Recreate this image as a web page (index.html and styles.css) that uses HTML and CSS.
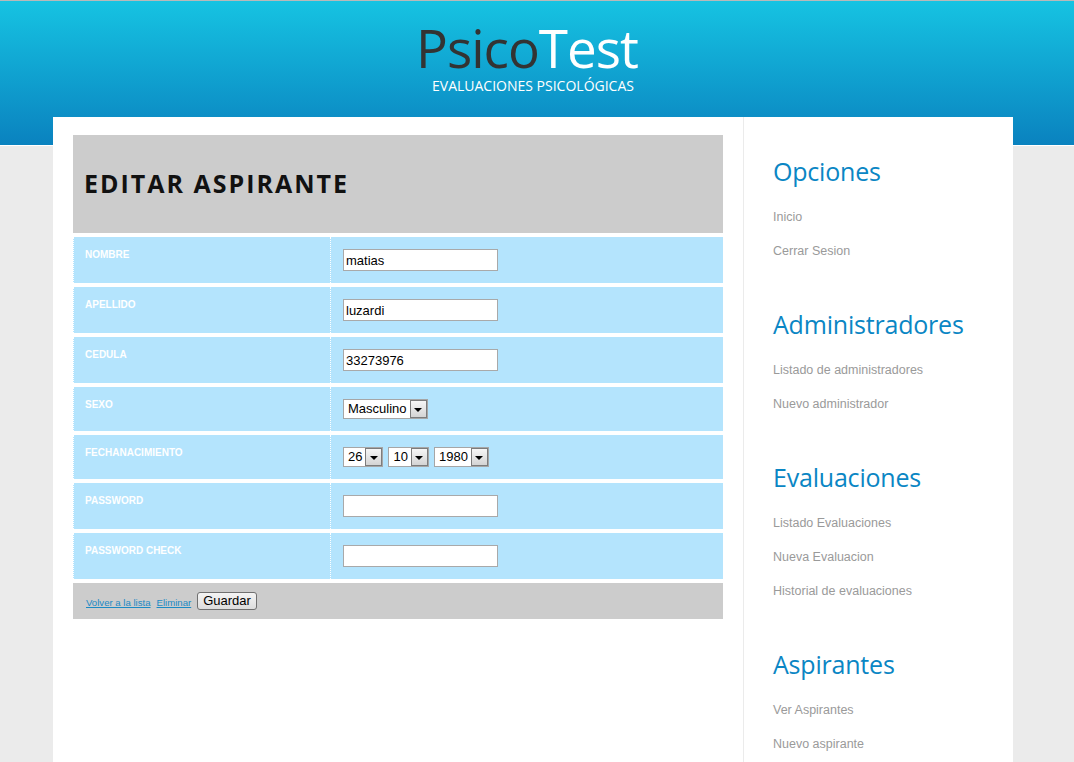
FILE: index.html
```html
<!DOCTYPE html>
<html lang="es">
<head>
<meta charset="utf-8">
<title>PsicoTest - Editar aspirante</title>
<link rel="stylesheet" href="styles.css">
</head>
<body>
<header class="site-header">
  <h1 class="logo"><span class="logo-dark">Psico</span><span class="logo-light">Test</span></h1>
  <p class="tagline">EVALUACIONES PSICOLÓGICAS</p>
</header>
<div class="page">
  <main class="content">
    <h2 class="page-title">EDITAR ASPIRANTE</h2>
    <form class="form">
      <div class="row">
        <label class="cell label">NOMBRE</label>
        <div class="cell value"><input class="text" type="text" value="matias"></div>
      </div>
      <div class="row">
        <label class="cell label">APELLIDO</label>
        <div class="cell value"><input class="text" type="text" value="luzardi"></div>
      </div>
      <div class="row">
        <label class="cell label">CEDULA</label>
        <div class="cell value"><input class="text" type="text" value="33273976"></div>
      </div>
      <div class="row">
        <label class="cell label">SEXO</label>
        <div class="cell value">
          <span class="select"><span class="select-text">Masculino</span><span class="select-arrow"></span></span>
        </div>
      </div>
      <div class="row">
        <label class="cell label">FECHANACIMIENTO</label>
        <div class="cell value selects">
          <span class="select"><span class="select-text">26</span><span class="select-arrow"></span></span>
          <span class="select"><span class="select-text">10</span><span class="select-arrow"></span></span>
          <span class="select"><span class="select-text">1980</span><span class="select-arrow"></span></span>
        </div>
      </div>
      <div class="row">
        <label class="cell label">PASSWORD</label>
        <div class="cell value"><input class="text" type="password" value=""></div>
      </div>
      <div class="row">
        <label class="cell label">PASSWORD CHECK</label>
        <div class="cell value"><input class="text" type="password" value=""></div>
      </div>
      <div class="actions">
        <a href="#" class="action-link">Volver a la lista</a>
        <a href="#" class="action-link">Eliminar</a>
        <button type="button" class="btn">Guardar</button>
      </div>
    </form>
  </main>
  <aside class="sidebar">
    <section class="side-section">
      <h3 class="side-title">Opciones</h3>
      <ul class="side-list">
        <li>Inicio</li>
        <li>Cerrar Sesion</li>
      </ul>
    </section>
    <section class="side-section">
      <h3 class="side-title">Administradores</h3>
      <ul class="side-list">
        <li>Listado de administradores</li>
        <li>Nuevo administrador</li>
      </ul>
    </section>
    <section class="side-section">
      <h3 class="side-title">Evaluaciones</h3>
      <ul class="side-list">
        <li>Listado Evaluaciones</li>
        <li>Nueva Evaluacion</li>
        <li>Historial de evaluaciones</li>
      </ul>
    </section>
    <section class="side-section">
      <h3 class="side-title">Aspirantes</h3>
      <ul class="side-list">
        <li>Ver Aspirantes</li>
        <li>Nuevo aspirante</li>
      </ul>
    </section>
  </aside>
</div>
</body>
</html>
```

FILE: styles.css
```css
html, body {
  margin: 0;
  padding: 0;
}

body {
  font-family: "Liberation Sans", Arial, sans-serif;
  background:
    linear-gradient(#b9b9b9, #b9b9b9) 0 0 / 100% 1px no-repeat,
    linear-gradient(to bottom, #16c3e2, #0a82bf) 0 1px / 100% 144px no-repeat,
    linear-gradient(#ffffff, #ffffff) 0 145px / 100% 1px no-repeat,
    #ebebeb;
}

.site-header {
  width: 960px;
  margin-left: 53px;
  height: 117px;
  box-sizing: border-box;
  padding-top: 20px;
  text-align: center;
}

.logo {
  margin: 0;
  font-family: "Open Sans", "Noto Sans", sans-serif;
  font-weight: 400;
  font-size: 53px;
  line-height: 56px;
  letter-spacing: -1px;
  padding-right: 12px;
}

.logo-dark { color: #333333; }
.logo-light { color: #ffffff; }

.tagline {
  margin: 2px 0 0;
  font-family: "Open Sans", "Noto Sans", sans-serif;
  font-size: 14px;
  line-height: 16px;
  color: #ffffff;
}

.page {
  display: flex;
  width: 960px;
  margin-left: 53px;
  background: #ffffff;
  min-height: calc(100vh - 117px);
}

.content {
  width: 650px;
  padding: 18px 20px;
}

.page-title {
  margin: 0 0 4px;
  height: 98px;
  box-sizing: border-box;
  background: #cccccc;
  display: flex;
  align-items: center;
  padding: 0 0 3px 11px;
  font-family: "Open Sans", "Noto Sans", sans-serif;
  font-weight: 700;
  font-size: 25px;
  letter-spacing: 2px;
  color: #111111;
}

.form {
  display: flex;
  flex-direction: column;
  gap: 4px;
  margin: 0;
}

.row {
  display: grid;
  grid-template-columns: 257px 1fr;
  background: #b4e4fd;
}

.cell {
  border-left: 1px dotted #ffffff;
}

.label {
  padding: 12px 11px;
  font-size: 10px;
  line-height: 12px;
  font-weight: 700;
  color: #ffffff;
}

.value {
  padding: 12px;
}

.selects {
  display: flex;
  gap: 5px;
}

.text {
  display: block;
  width: 155px;
  height: 22px;
  box-sizing: border-box;
  margin: 0;
  padding: 0 2px;
  border: 1px solid #a9a9a9;
  background: #ffffff;
  font-family: "Liberation Sans", Arial, sans-serif;
  font-size: 13px;
  color: #000000;
}

.select {
  display: inline-flex;
  height: 20px;
  box-sizing: border-box;
  border: 1px solid #a6a6a6;
  background: #ffffff;
  font-size: 13px;
  line-height: 18px;
  color: #000000;
}

.select-text {
  padding: 0 3px 0 4px;
}

.select-arrow {
  width: 17px;
  box-sizing: border-box;
  border: 1px solid #7c7c7c;
  background: linear-gradient(#f6f6f6, #d4d4d4);
  display: flex;
  align-items: center;
  justify-content: center;
}

.select-arrow::before {
  content: "";
  border-left: 4px solid transparent;
  border-right: 4px solid transparent;
  border-top: 4px solid #000000;
  margin-top: 1px;
}

.actions {
  height: 36px;
  background: #cccccc;
  display: flex;
  align-items: center;
  gap: 6px;
  padding-left: 13px;
}

.action-link {
  font-size: 9.6px;
  color: #1b8ac4;
  text-decoration: underline;
  margin-top: 2px;
}

.btn {
  height: 18px;
  padding: 0 5px;
  border: 1px solid #707070;
  border-radius: 3px;
  background: linear-gradient(#f4f4f4, #dddddd);
  font-family: "Liberation Sans", Arial, sans-serif;
  font-size: 13px;
  line-height: 16px;
  color: #000000;
}

.sidebar {
  width: 240px;
  border-left: 1px solid #ebebeb;
  padding: 39px 0 0 29px;
}

.side-section {
  margin-bottom: 41px;
}

.side-title {
  margin: 0 0 14px;
  font-family: "Open Sans", "Noto Sans", sans-serif;
  font-weight: 400;
  font-size: 25px;
  line-height: 30px;
  letter-spacing: -0.2px;
  color: #0a86c4;
}

.side-list {
  list-style: none;
  margin: 0;
  padding: 0;
}

.side-list li {
  font-size: 12.5px;
  line-height: 34px;
  color: #9a9a9a;
}
```
